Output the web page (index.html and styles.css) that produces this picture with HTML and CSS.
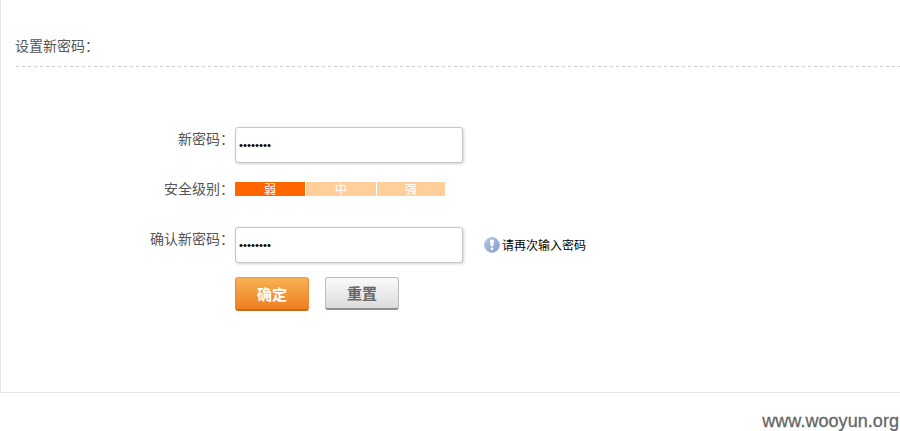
FILE: index.html
```html
<!DOCTYPE html>
<html lang="zh-CN">
<head>
<meta charset="utf-8">
<title>设置新密码</title>
<link rel="stylesheet" href="styles.css">
</head>
<body>
<main class="panel">
  <h1 class="title">设置新密码：</h1>
  <form class="form">
    <div class="row row-input">
      <label class="label" for="pwd">新密码：</label>
      <input class="input" id="pwd" type="password" value="12345678">
    </div>
    <div class="row row-level">
      <span class="label">安全级别：</span>
      <div class="levels">
        <span class="level level-on">弱</span>
        <span class="level">中</span>
        <span class="level level-last">强</span>
      </div>
    </div>
    <div class="row row-input">
      <label class="label" for="pwd2">确认新密码：</label>
      <input class="input" id="pwd2" type="password" value="12345678">
      <span class="hint">
        <svg class="hint-icon" width="16" height="16" viewBox="0 0 16 16">
          <defs><linearGradient id="g" x1="0" y1="0" x2="1" y2="1"><stop offset="0" stop-color="#b5c8e6"/><stop offset="1" stop-color="#7f9bcd"/></linearGradient></defs>
          <circle cx="8" cy="8" r="7.5" fill="url(#g)" stroke="#b0bfdd"/>
          <path d="M6 3.2Q8 2 10 3.2L9.2 9.2H6.8Z" fill="#fff"/>
          <circle cx="8" cy="11.8" r="1.4" fill="#fff"/>
        </svg>
        <span class="hint-text">请再次输入密码</span>
      </span>
    </div>
    <div class="actions">
      <button class="btn btn-ok" type="button">确定</button>
      <button class="btn btn-reset" type="button">重置</button>
    </div>
  </form>
</main>
<footer class="site">www.wooyun.org</footer>
</body>
</html>
```
FILE: styles.css
```css
* { box-sizing: border-box; }
body {
  margin: 0;
  height: 431px;
  overflow: hidden;
  background: #fff;
  color: #555;
  font-family: "Liberation Sans", "Noto Sans CJK SC", sans-serif;
  font-size: 14px;
}
.panel {
  height: 393px;
  padding: 36px 0 0 15px;
  border-left: 1px solid #e3e3e3;
  border-bottom: 1px solid #e3e3e3;
}
.title {
  margin: 0;
  height: 31px;
  line-height: 20px;
  font-size: 14px;
  font-weight: 400;
  text-indent: -1px;
  background: repeating-linear-gradient(90deg, #c8c8c8 0 3px, transparent 3px 6px) 0 100% / 100% 1px no-repeat;
}
.form { padding-top: 60px; }
.row { display: flex; align-items: flex-start; }
.row-input { height: 50px; }
.row-level { height: 50px; }
.label {
  width: 219px;
  padding: 2px 1px 0 0;
  line-height: 20px;
  text-align: right;
  white-space: nowrap;
}
.input {
  width: 228px;
  height: 36px;
  padding: 0 3px;
  border: 1px solid #c6c6c6;
  border-radius: 3px;
  box-shadow: 1px 1px 3px rgba(0, 0, 0, .18);
  background: #fff;
  color: #000;
  outline: 0;
  font: 11.4px "Liberation Sans", sans-serif;
}
.levels {
  display: flex;
  gap: 1px;
  margin-top: 5px;
}
.level {
  width: 70px;
  height: 14px;
  line-height: 16px;
  text-align: center;
  font-size: 12px;
  color: #fff;
  background: #ffcf9b;
}
.level-on { background: #f60; }
.level-last { width: 68px; }
.hint {
  display: flex;
  align-items: center;
  gap: 2px;
  height: 36px;
  margin-left: 21px;
  font-size: 12px;
  color: #000;
}
.hint-icon { flex: none; }
.hint-text { padding-bottom: 2px; }
.actions {
  display: flex;
  gap: 16px;
  padding-left: 219px;
}
.btn {
  width: 74px;
  height: 34px;
  padding: 0;
  border: 1px solid;
  border-bottom-width: 2px;
  border-radius: 3px;
  font: bold 15px "Liberation Sans", "Noto Sans CJK SC", sans-serif;
}
.btn-ok {
  color: #fff;
  border-color: #dda252 #e58c35 #c56a1e;
  background: linear-gradient(#f9b055, #ee7f22);
}
.btn-reset {
  height: 33px;
  padding-bottom: 2px;
  color: #666;
  border-color: #bbb #bbb #8f8f8f;
  background: linear-gradient(#fafafa, #dcdcdc);
}
.site {
  padding: 18px 1px 0 0;
  line-height: 20px;
  text-align: right;
  font-size: 18px;
  letter-spacing: .05px;
  color: #666;
  -webkit-text-stroke: .3px #666;
}
```
